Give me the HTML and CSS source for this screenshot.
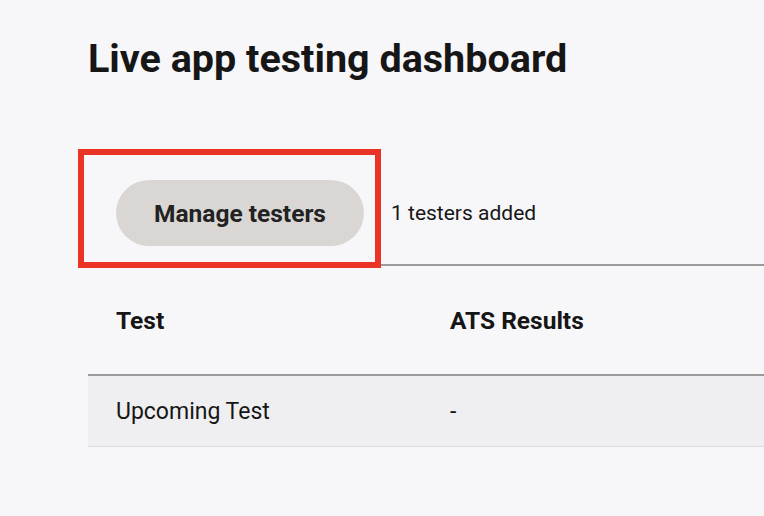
FILE: index.html
```html
<!DOCTYPE html>
<html>
<head>
<meta charset="utf-8">
<link rel="stylesheet" href="styles.css">
</head>
<body>
<main class="page">
  <h1 class="title">Live app testing dashboard</h1>
  <div class="toolbar">
    <div class="highlight"></div>
    <button class="btn">Manage testers</button>
    <span class="count">1 testers added</span>
  </div>
  <div class="table">
    <div class="row head">
      <div class="cell c1">Test</div>
      <div class="cell c2">ATS Results</div>
    </div>
    <div class="row body">
      <div class="cell c1">Upcoming Test</div>
      <div class="cell c2">-</div>
    </div>
  </div>
</main>
</body>
</html>
```

FILE: styles.css
```css
html, body {
  margin: 0;
  padding: 0;
  background: #f7f7f9;
  font-family: Roboto, "Liberation Sans", sans-serif;
  color: #161616;
  overflow: hidden;
}
.page {
  padding-left: 88px;
  padding-top: 33px;
}
.title {
  margin: 0;
  font-size: 39.5px;
  font-weight: 700;
  line-height: 52px;
  letter-spacing: 0;
}
.toolbar {
  position: relative;
  display: flex;
  align-items: center;
  margin-top: 95px;
  padding-left: 28px;
  height: 66px;
}
.highlight {
  position: absolute;
  left: -10px;
  top: -31px;
  width: 291px;
  height: 107px;
  border: 6px solid #ea3326;
  pointer-events: none;
}
.btn {
  width: 248px;
  height: 66px;
  border: none;
  border-radius: 33px;
  background: #dad6d4;
  color: #222;
  font-family: Roboto, "Liberation Sans", sans-serif;
  font-size: 24.5px;
  font-weight: 700;
  padding: 0;
}
.count {
  margin-left: 27px;
  font-size: 21px;
  color: #161616;
}
.table {
  margin-top: 18px;
  border-top: 2px solid #9a9a9a;
}
.row {
  display: flex;
  align-items: center;
}
.row.head {
  height: 108px;
  border-bottom: 2px solid #9a9a9a;
  font-weight: 700;
  font-size: 24.5px;
}
.row.body {
  height: 70px;
  background: #efeff1;
  border-bottom: 1px solid #dcdcde;
  font-size: 23px;
}
.cell.c1 {
  width: 334px;
  padding-left: 28px;
}
.cell.c2 {
  flex: 1;
}
```
